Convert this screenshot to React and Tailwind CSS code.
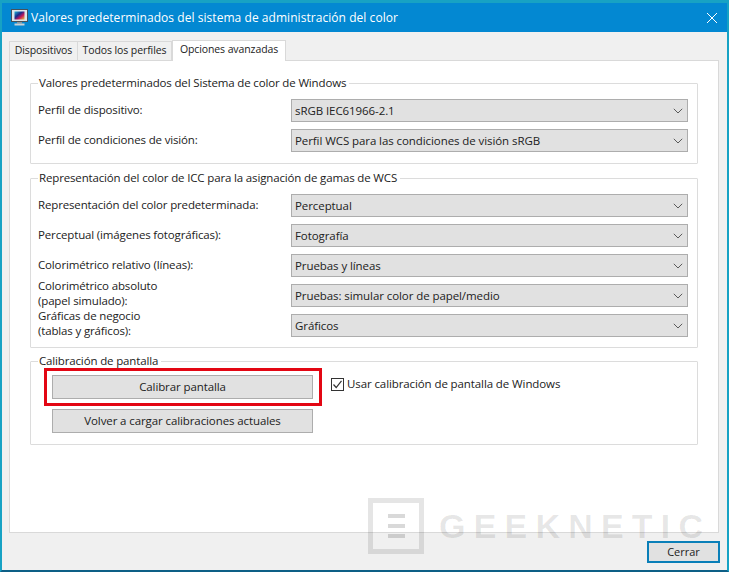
import React from "react";

const font = { fontFamily: '"Open Sans", "Noto Sans", sans-serif' };

const WindowIcon = () => (
  <svg width="17" height="17" viewBox="0 0 17 17" className="mr-[3px] shrink-0">
    <defs>
      <linearGradient id="scr" x1="0" y1="0" x2="1" y2="1">
        <stop offset="0" stopColor="#1fb7d6" />
        <stop offset="0.4" stopColor="#1a2a8a" />
        <stop offset="0.65" stopColor="#c2185b" />
        <stop offset="1" stopColor="#e8c43a" />
      </linearGradient>
    </defs>
    <rect x="0.5" y="0.5" width="16" height="12" fill="#dfe6ea" stroke="#47525a" />
    <rect x="3.5" y="2.5" width="10" height="8" fill="url(#scr)" />
    <rect x="6" y="13" width="5" height="1.5" fill="#8c979e" />
    <rect x="3.5" y="14.5" width="10" height="2" fill="#c9d0d4" />
  </svg>
);

const Chevron = () => (
  <svg width="10" height="6" viewBox="0 0 10 6" className="shrink-0">
    <path d="M0.8 0.8 L5 5 L9.2 0.8" fill="none" stroke="#5a5a5a" strokeWidth="1" />
  </svg>
);

const Select = ({ value }) => (
  <div className="w-[397px] h-[23px] shrink-0 bg-[#e1e1e1] border border-[#adadad] flex items-center justify-between pl-[3px] pr-[4px] text-[11.5px] tracking-[-0.08px] text-[#222]">
    <span>{value}</span>
    <Chevron />
  </div>
);

const Row = ({ label, value, multi }) => (
  <div className="flex items-center justify-between h-[23px]">
    <div className={`text-[11.5px] tracking-[-0.15px] leading-[15px] text-[#222] whitespace-pre-line ${multi ? "-mt-1.5" : "-mt-0.5"}`}>{label}</div>
    <Select value={value} />
  </div>
);

const Group = ({ title, className, children }) => (
  <fieldset className={`border border-[#dcdcdc] rounded-[1px] mx-5 pl-[7px] pr-[9px] ${className}`}>
    <legend className="pl-px pr-[3px] text-[11.5px] tracking-[-0.15px] leading-[16px] text-[#222]">{title}</legend>
    {children}
  </fieldset>
);

const Watermark = () => (
  <div className="absolute left-[368px] top-[498px] flex items-center gap-[15px] pointer-events-none text-[#000]/10">
    <div className="w-14 h-14 border-[5px] border-[#000]/10 flex flex-col items-center justify-center gap-1.5">
      <div className="w-[17px] h-1 bg-[#000]/15" />
      <div className="w-[17px] h-1 bg-[#000]/15" />
      <div className="w-[17px] h-1 bg-[#000]/15" />
    </div>
    <div className="text-[34px] font-bold leading-none tracking-[8.2px]" style={{ fontFamily: '"Liberation Sans", sans-serif' }}>
      GEEKNETIC
    </div>
  </div>
);

export default function App() {
  return (
    <div className="relative w-[729px] h-[572px] overflow-hidden bg-[#f0f0f0] border-[2px] border-t-[3px] border-[#17a2c4] border-b-[#0d5f86] flex flex-col" style={font}>
      {/* Title bar */}
      <div className="h-[29px] shrink-0 bg-[#0388d2] flex items-center pl-[9px] pr-[9px] text-white">
        <WindowIcon />
        <span className="text-[12px] tracking-[0.05px]">Valores predeterminados del sistema de administración del color</span>
        <svg width="12" height="12" viewBox="0 0 12 12" className="ml-auto">
          <path d="M1 1 L11 11 M11 1 L1 11" stroke="#fff" strokeWidth="1" fill="none" />
        </svg>
      </div>

      {/* Tabs */}
      <div className="flex items-end h-7 pl-[7px] text-[10.5px] tracking-[-0.1px] whitespace-nowrap text-[#222] shrink-0">
        <div className="w-[69px] h-[19px] border border-b-0 border-[#d9d9d9] flex items-center justify-center">Dispositivos</div>
        <div className="w-[94px] h-[19px] border border-b-0 border-l-0 border-[#d9d9d9] flex items-center justify-center">Todos los perfiles</div>
        <div className="w-[114px] h-[21px] bg-white border border-b-0 border-[#d9d9d9] flex items-center justify-center pb-[3px] -mb-px relative z-10">Opciones avanzadas</div>
      </div>

      {/* Panel */}
      <div className="ml-[7px] mr-2 h-[473px] shrink-0 bg-white border border-[#d9d9d9] pt-[14px] flex flex-col">
        <Group title="Valores predeterminados del Sistema de color de Windows" className="pt-[8px] pb-[11px] flex flex-col gap-[7px]">
          <Row label="Perfil de dispositivo:" value="sRGB IEC61966-2.1" />
          <Row label="Perfil de condiciones de visión:" value="Perfil WCS para las condiciones de visión sRGB" />
        </Group>

        <Group title="Representación del color de ICC para la asignación de gamas de WCS" className="mt-1.5 pt-[8px] pb-[10px] flex flex-col gap-[7px]">
          <Row label="Representación del color predeterminada:" value="Perceptual" />
          <Row label="Perceptual (imágenes fotográficas):" value="Fotografía" />
          <Row label="Colorimétrico relativo (líneas):" value="Pruebas y líneas" />
          <Row multi label={"Colorimétrico absoluto\n(papel simulado):"} value="Pruebas: simular color de papel/medio" />
          <Row multi label={"Gráficas de negocio\n(tablas y gráficos):"} value="Gráficos" />
        </Group>

        <Group title="Calibración de pantalla" className="mt-[5px] pt-[5px] pb-[11px] flex">
          <div className="relative flex flex-col gap-2.5 w-[261px] shrink-0 ml-3.5 mt-[1px]">
            <button className="h-6 bg-[#e1e1e1] border border-[#adadad] text-[11.5px] tracking-[-0.1px] text-[#222]">Calibrar pantalla</button>
            <button className="h-6 bg-[#e1e1e1] border border-[#adadad] text-[11.5px] tracking-[-0.1px] text-[#222]">Volver a cargar calibraciones actuales</button>
            <div className="absolute -left-2 -top-[7px] w-[278px] h-[38px] border-[3px] border-[#e30613]" />
          </div>
          <div className="ml-[18px] h-6 -mt-0.5 flex items-center gap-[3px] text-[11.5px] tracking-[-0.1px] text-[#222]">
            <svg width="13" height="13" viewBox="0 0 13 13" className="shrink-0">
              <rect x="0.5" y="0.5" width="12" height="12" fill="#fff" stroke="#333" />
              <path d="M2.5 6.5 L5.2 9.5 L10.5 2.8" fill="none" stroke="#333" strokeWidth="1.2" />
            </svg>
            <span>Usar calibración de pantalla de Windows</span>
          </div>
        </Group>
      </div>

      {/* Footer */}
      <div className="flex justify-end pr-[7px] pt-[8px]">
        <button className="w-[73px] h-[22px] bg-[#e1e1e1] border-2 border-[#0a7fb8] text-[11px] text-[#222]">Cerrar</button>
      </div>

      <div className="absolute -left-[2px] -top-[3px] w-[729px] h-[572px] pointer-events-none">
        <Watermark />
      </div>
    </div>
  );
}
